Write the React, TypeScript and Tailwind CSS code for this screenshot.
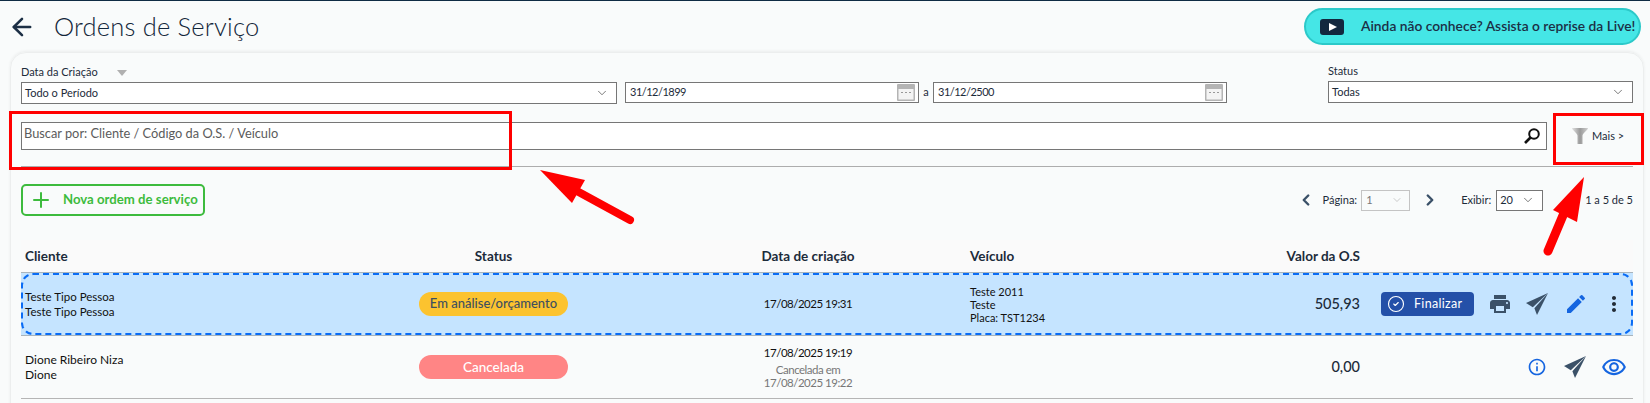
import { ArrowLeft, ChevronDown, ChevronLeft, ChevronRight, CircleCheck, Plus } from 'lucide-react';
import { MdEdit, MdInfoOutline, MdMoreVert, MdOutlineRemoveRedEye, MdPrint } from 'react-icons/md';

const rowGrid = 'grid grid-cols-[323px_299px_327px_200px_190px_273px] items-center';

function SendIcon({ className }: { className: string }) {
  return (
    <svg viewBox="0 0 21 21" className={className} fill="#3b5168">
      <path d="M21 0 0 9.500 6.500 13.500Z" />
      <path d="M21 0 8 14.500 10.500 21Z" />
    </svg>
  );
}

function CalendarIcon() {
  return (
    <svg viewBox="0 0 18 17" className="h-[17px] w-[18px]">
      <rect width="18" height="17" rx="1" fill="#b4b4b4" />
      <rect x="1.500" y="5" width="15" height="10.500" fill="#f4f4f4" />
      <path d="M4 8.500h2M8 8.500h2M12 8.500h2" stroke="#999" strokeWidth="1.200" />
    </svg>
  );
}

function SelectBox({ value, className }: { value: string; className: string }) {
  return (
    <div className={`flex items-center justify-between bg-white border border-[#767676] pl-[3px] pr-[7px] text-[11px] text-[#1c2b3a] ${className}`}>
      <span>{value}</span>
      <ChevronDown size={14} strokeWidth={1.2} className="text-[#444]" />
    </div>
  );
}

function DateBox({ value }: { value: string }) {
  return (
    <div className="flex h-[21px] w-[294px] items-center justify-between border border-[#767676] bg-white pl-[4px] pr-[3px] text-[11px] tracking-[-0.5px] text-[#1c2b3a]">
      <span>{value}</span>
      <CalendarIcon />
    </div>
  );
}

export default function App() {
  return (
    <div className="relative h-[403px] w-[1650px] overflow-hidden border-t border-[#0f2c44] bg-[#f9fbfb] font-['Lato','Liberation_Sans',sans-serif] text-[#1c2b3a]">
      <header className="flex h-[51px] items-center justify-between pl-[8px] pr-[9px]">
        <div className="flex items-center">
          <ArrowLeft size={28} strokeWidth={2.2} className="text-[#1c2f45]" />
          <h1 className="ml-[18px] text-[25.500px] font-light tracking-[0.2px] text-[#12263a]">Ordens de Serviço</h1>
        </div>
        <button className="flex h-[37px] w-[337px] items-center rounded-full border-2 border-[#2cc9c9] bg-[#45e6e6] pl-[14px] text-[13.800px] font-semibold whitespace-nowrap text-[#1c2f45]">
          <svg viewBox="0 0 24 16" className="h-[16px] w-[24px]">
            <rect width="24" height="16" rx="3" fill="#12283f" />
            <path d="M9 4 17 8 9 12Z" fill="#fff" />
          </svg>
          <span className="ml-[17px]">Ainda não conhece? Assista o reprise da Live!</span>
        </button>
      </header>

      <main className="ml-[10px] h-[360px] w-[1634px] rounded-t-[16px] border border-[#eceeee] pl-[10px] pr-[10px] pt-[9px] shadow-[0_-1px_3px_rgba(0,0,0,0.06)]">
        <div className="flex items-start">
          <div>
            <div className="flex h-[20px] items-center text-[11px]">
              Data da Criação
              <span className="ml-[19px] mt-[2px] h-0 w-0 border-x-[5px] border-t-[6px] border-x-transparent border-t-[#b0b0b0]" />
            </div>
            <SelectBox value="Todo o Período" className="h-[22px] w-[596px]" />
          </div>
          <div className="ml-[8px] mt-[20px] flex items-center">
            <DateBox value="31/12/1899" />
            <span className="w-[14px] text-center text-[11px]">a</span>
            <DateBox value="31/12/2500" />
          </div>
          <div className="ml-auto">
            <div className="flex h-[19px] items-center text-[11px]">Status</div>
            <SelectBox value="Todas" className="h-[22px] w-[305px]" />
          </div>
        </div>

        <div className="mt-[18px] flex items-center">
          <div className="flex h-[28px] w-[1526px] items-center justify-between border border-[#767676] bg-white pl-[2px] pr-[6px] text-[12.800px] text-[#5b5b5b]">
            <span className="-mt-[4px]">Buscar por: Cliente / Código da O.S. / Veículo</span>
            <svg viewBox="0 0 16 16" className="h-[16px] w-[16px]" fill="none" stroke="#111" strokeWidth="2">
              <circle cx="10" cy="6" r="4.800" />
              <path d="M6.500 9.500 1 15" strokeWidth="2.600" />
            </svg>
          </div>
          <div className="ml-[25px] flex items-center text-[11px]">
            <svg viewBox="0 0 16 16" className="h-[16px] w-[16px]">
              <defs>
                <linearGradient id="funnel" x1="0" x2="1">
                  <stop offset="0" stopColor="#e2e2e2" />
                  <stop offset="0.5" stopColor="#9a9a9a" />
                  <stop offset="1" stopColor="#d0d0d0" />
                </linearGradient>
              </defs>
              <path d="M0 0h16c0 2-5 5-5.500 7.500V16H5.500V7.500C5 5 0 2 0 0Z" fill="url(#funnel)" />
            </svg>
            <span className="ml-[4px]">Mais &gt;</span>
          </div>
        </div>

        <div className="mt-[16px] h-px bg-[#adadad]" />

        <div className="mt-[17px] flex h-[32px] items-center justify-between">
          <button className="flex h-[32px] w-[184px] items-center rounded-[5px] border-2 border-[#3dbb3d] pl-[6px] text-[13.200px] font-bold text-[#3dbb3d]">
            <Plus size={24} strokeWidth={2} />
            <span className="ml-[10px]">Nova ordem de serviço</span>
          </button>
          <div className="flex items-center text-[11px]">
            <ChevronLeft size={18} strokeWidth={3.200} className="text-[#3b5168]" />
            <span className="ml-[8px]">Página:</span>
            <div className="ml-[4px] flex h-[21px] w-[49px] items-center justify-between border border-[#c4c4c4] pl-[4px] pr-[6px] text-[#777]">
              <span>1</span>
              <ChevronDown size={12} strokeWidth={1.2} className="text-[#aaa]" />
            </div>
            <ChevronRight size={18} strokeWidth={3.200} className="ml-[11px] text-[#3b5168]" />
            <span className="ml-[22px]">Exibir:</span>
            <SelectBox value="20" className="ml-[5px] h-[21px] w-[47px]" />
            <span className="ml-[42px]">1 a 5 de 5</span>
          </div>
        </div>

        <div className={`${rowGrid} mt-[24px] h-[32px] bg-[#fafafa] text-[13.500px] font-bold`}>
          <div className="pl-[4px]">Cliente</div>
          <div className="text-center">Status</div>
          <div className="pl-[3px] text-center">Data de criação</div>
          <div>Veículo</div>
          <div className="text-right">Valor da O.S</div>
        </div>

        <div className="h-[64px] border-y border-[#a9b4bc] bg-[#c5e4ff]">
          <div className="grid h-full grid-cols-[321px_299px_327px_200px_190px_271px] items-center rounded-[12px] border-2 border-dashed border-[#0a6cf5]">
            <div className="pl-[2px] text-[11.500px] leading-[15px] text-[#111]">
              <div>Teste Tipo Pessoa</div>
              <div>Teste Tipo Pessoa</div>
            </div>
            <div className="flex justify-center">
              <span className="flex h-[24px] w-[149px] items-center justify-center rounded-full bg-[#fcc32f] text-[13px] font-medium text-[#3f4f5f]">Em análise/orçamento</span>
            </div>
            <div className="pl-[3px] text-center text-[11.500px] tracking-[-0.5px] text-[#111]">17/08/2025 19:31</div>
            <div className="text-[11px] leading-[13px] text-[#111]">
              <div>Teste 2011</div>
              <div>Teste</div>
              <div>Placa: TST1234</div>
            </div>
            <div className="text-right text-[14.500px] font-medium">505,93</div>
            <div className="flex items-center pl-[21px]">
              <button className="flex h-[24px] w-[93px] items-center rounded-[4px] bg-[#2450a8] pl-[6px] text-[12.500px] tracking-[0.3px] text-white">
                <CircleCheck size={18} strokeWidth={1.500} />
                <span className="ml-[9px]">Finalizar</span>
              </button>
              <MdPrint size={24} className="ml-[14px] text-[#3b5168]" />
              <SendIcon className="ml-[14px] h-[22px] w-[22px]" />
              <MdEdit size={24} className="ml-[16px] text-[#1565e0]" />
              <MdMoreVert size={24} className="ml-[14px] text-[#222b36]" />
            </div>
          </div>
        </div>

        <div className={`${rowGrid} h-[63px] border-b border-[#b5b5b5]`}>
          <div className="pl-[4px] text-[12px] leading-[15px] text-[#111]">
            <div>Dione Ribeiro Niza</div>
            <div>Dione</div>
          </div>
          <div className="flex justify-center">
            <span className="flex h-[24px] w-[149px] items-center justify-center rounded-full bg-[#ff8585] text-[13.500px] font-medium text-white">Cancelada</span>
          </div>
          <div className="pl-[3px] text-center text-[11.500px] leading-[13px] tracking-[-0.5px]">
            <div className="text-[#111]">17/08/2025 19:19</div>
            <div className="mt-[4px] text-[#777]">Cancelada em</div>
            <div className="text-[#777]">17/08/2025 19:22</div>
          </div>
          <div />
          <div className="text-right text-[14.500px] font-medium">0,00</div>
          <div className="flex items-center justify-end pr-[6px]">
            <MdInfoOutline size={20} className="text-[#1565e0]" />
            <SendIcon className="ml-[17px] h-[22px] w-[22px]" />
            <MdOutlineRemoveRedEye size={26} className="ml-[15px] text-[#1565e0]" />
          </div>
        </div>
      </main>

      {/* marcações em vermelho por cima da tela */}
      <div className="absolute left-[9px] top-[110px] h-[59px] w-[503px] border-[3px] border-[#ff0000]" />
      <div className="absolute left-[1553px] top-[112px] h-[52px] w-[91px] border-[3px] border-[#ff0000]" />
      <svg className="absolute left-0 top-0 h-[403px] w-[1650px]" viewBox="0 0 1650 403" fill="none">
        <path d="M630 219 575 189" stroke="#ff0000" strokeWidth="8" strokeLinecap="round" />
        <path d="M540 169 585 179 572 202Z" fill="#ff0000" />
        <path d="M1548 250 1564 212" stroke="#ff0000" strokeWidth="9" strokeLinecap="round" />
        <path d="M1584 176 1577 221 1553 209Z" fill="#ff0000" />
      </svg>
    </div>
  );
}
